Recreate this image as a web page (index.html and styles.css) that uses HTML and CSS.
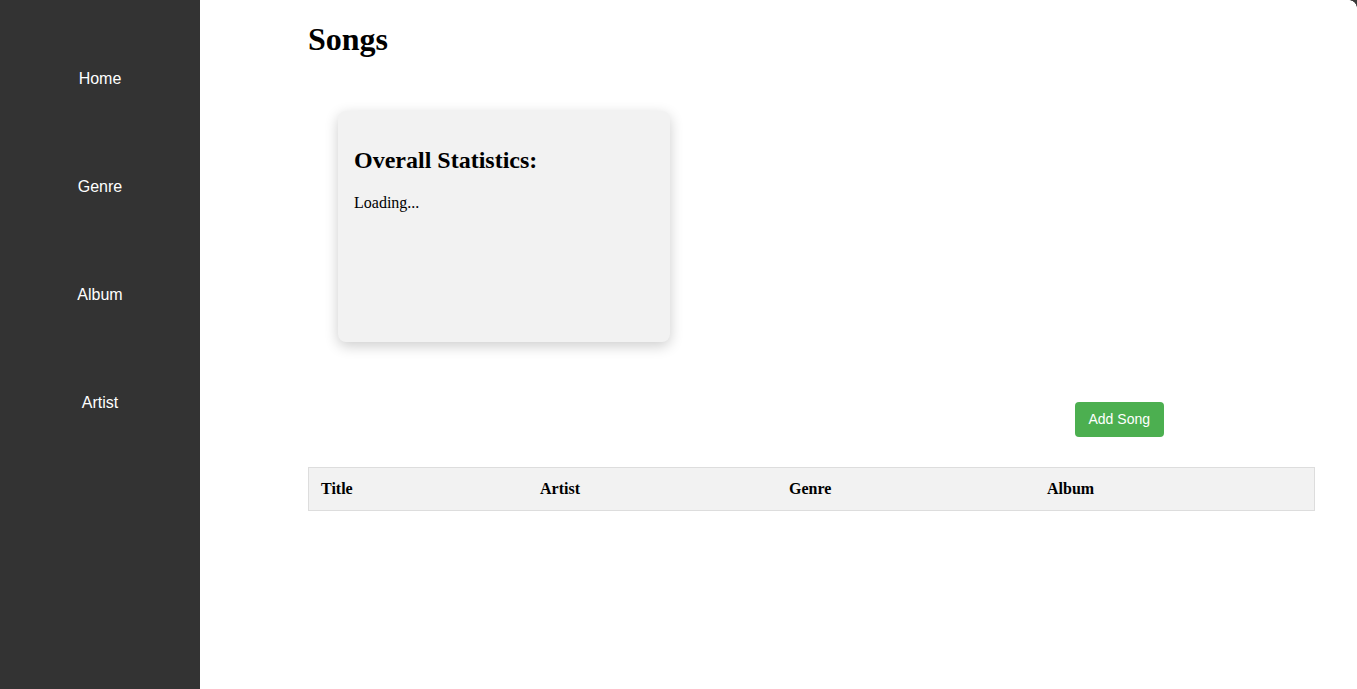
FILE: index.html
```html
<!DOCTYPE html>
<html lang="en">
<head>
<meta charset="utf-8">
<title>Songs</title>
<link rel="stylesheet" href="styles.css">
</head>
<body>
<div class="app">
  <nav class="sidebar">
    <a class="nav-link" href="#">Home</a>
    <a class="nav-link" href="#">Genre</a>
    <a class="nav-link" href="#">Album</a>
    <a class="nav-link" href="#">Artist</a>
  </nav>
  <main class="main">
    <h1 class="page-title">Songs</h1>
    <section class="stats-card">
      <h2 class="stats-title">Overall Statistics:</h2>
      <p class="stats-text">Loading...</p>
    </section>
    <div class="actions">
      <button class="add-btn" type="button">Add Song</button>
    </div>
    <table class="songs-table">
      <thead>
        <tr>
          <th class="col-title">Title</th>
          <th class="col-artist">Artist</th>
          <th class="col-genre">Genre</th>
          <th class="col-album">Album</th>
        </tr>
      </thead>
      <tbody></tbody>
    </table>
  </main>
</div>
<div class="window-corner"></div>
</body>
</html>
```
FILE: styles.css
```css
html, body {
  margin: 0;
  padding: 0;
  height: 100%;
}

body {
  font-family: "Liberation Serif", "Times New Roman", serif;
  font-size: 16px;
  color: #000;
  background: #fff;
}

.app {
  display: flex;
  min-height: 100%;
}

.sidebar {
  width: 200px;
  flex: 0 0 200px;
  background: #333333;
  display: flex;
  flex-direction: column;
  padding-top: 25px;
  min-height: 689px;
  box-sizing: border-box;
}

.nav-link {
  display: block;
  text-align: center;
  color: #ffffff;
  text-decoration: none;
  font-family: "Liberation Sans", Arial, sans-serif;
  font-size: 16px;
  line-height: 18px;
  padding: 45px 0;
}

.main {
  flex: 1;
  padding: 0 42px 0 108px;
  min-width: 0;
}

.page-title {
  font-size: 32px;
  font-weight: bold;
  margin: 21px 0 21px;
}

.stats-card {
  width: 300px;
  height: 199px;
  margin: 53px 30px 60px 30px;
  padding: 16px;
  background: #f2f2f2;
  border-radius: 8px;
  box-shadow: 0 4px 14px rgba(0, 0, 0, 0.2);
}

.stats-title {
  font-size: 24px;
  font-weight: bold;
  margin: 20px 0 20px;
}

.stats-text {
  margin: 0;
  font-size: 16px;
}

.actions {
  display: flex;
  justify-content: flex-end;
  padding-right: 151px;
  margin-bottom: 30px;
}

.add-btn {
  background: #4caf50;
  color: #ffffff;
  border: none;
  border-radius: 4px;
  font-family: "Liberation Sans", Arial, sans-serif;
  font-size: 14px;
  line-height: 16px;
  padding: 9px 14px 10px;
  white-space: nowrap;
  cursor: pointer;
}

.songs-table {
  width: 100%;
  border-collapse: collapse;
  border: 1px solid #dddddd;
}

.songs-table th {
  background: #f2f2f2;
  text-align: left;
  font-weight: bold;
  font-size: 16px;
  line-height: 18px;
  padding: 12px;
}

.col-title { width: 195px; }
.col-artist { width: 225px; }
.col-genre { width: 234px; }

.window-corner {
  position: absolute;
  top: 0;
  right: 0;
  width: 8px;
  height: 8px;
  background: radial-gradient(circle at 0 100%, transparent 7.5px, #3a3a3a 8px);
}
```
